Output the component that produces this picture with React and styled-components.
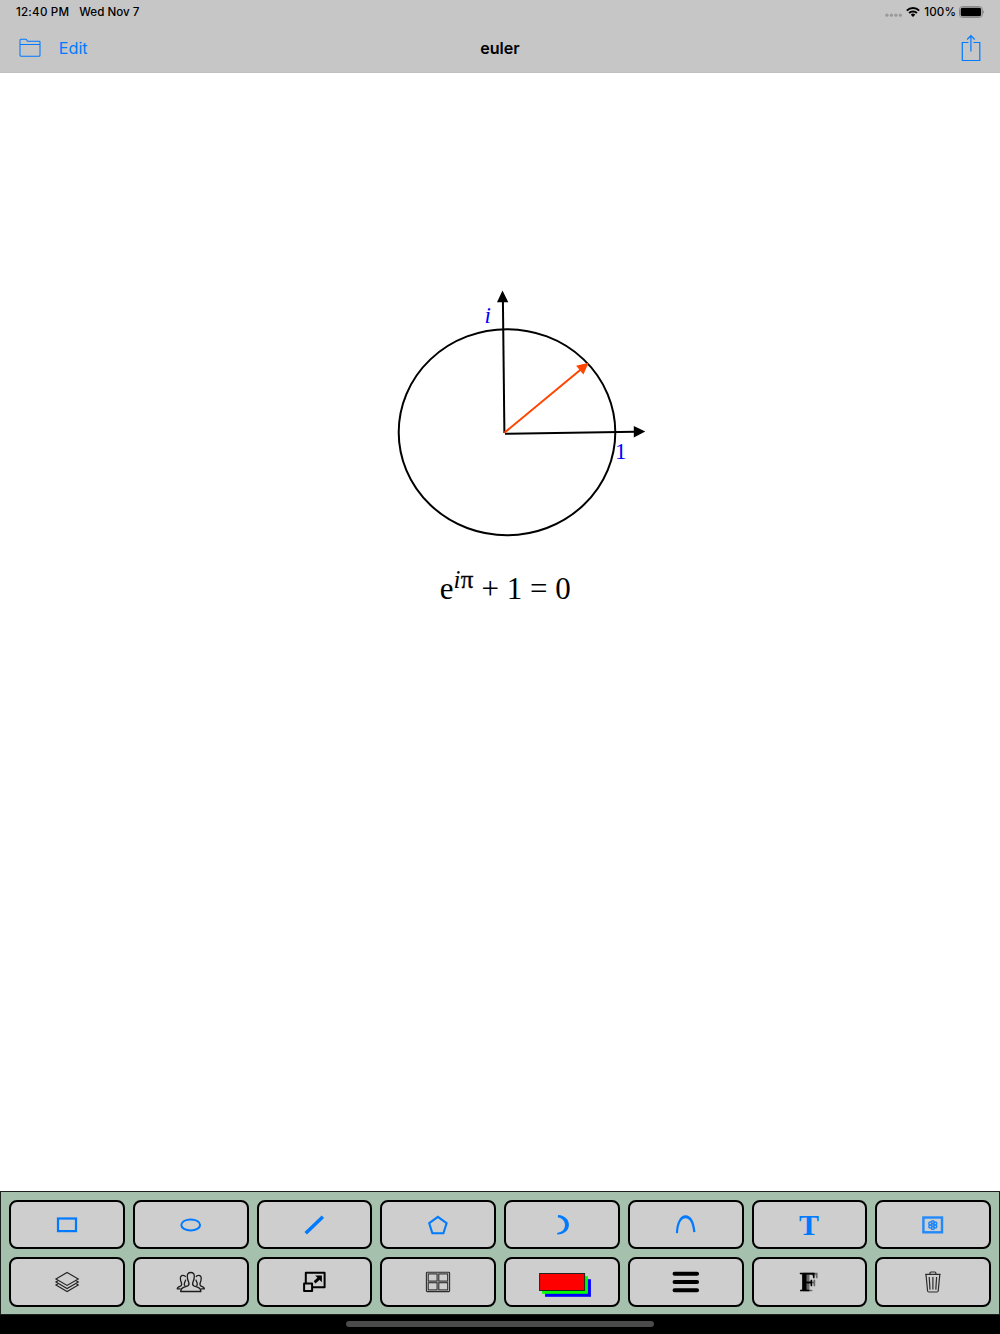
import React from "react";
import styled, { createGlobalStyle } from 'styled-components';

const GlobalStyle = createGlobalStyle`
    * {
        box-sizing: border-box;
    }
    body {
        margin: 0;
        background: #000;
    }
`

const Screen = styled.div`
    display: flex;
    flex-direction: column;
    width: 1000px;
    height: 1334px;
    overflow: hidden;
    background: #000;
    font-family: Inter, sans-serif;
`

const Header = styled.header`
    height: 73px;
    background: #c6c6c6;
    border-bottom: 1px solid #c0c0c0;
    color: #000;
`

const StatusBar = styled.div`
    display: flex;
    justify-content: space-between;
    align-items: center;
    height: 24px;
    padding: 0 15px 0 16px;
    font-size: 11.6px;
    font-weight: 500;
`

const StatusGroup = styled.div`
    display: flex;
    align-items: center;
    gap: ${props => props.$gap}px;
`

const StatusText = styled.span`
    letter-spacing: ${props => props.$spacing || 0}px;
`

const BatteryIcon = styled.svg`
    margin-left: -1px;
`

const NavBar = styled.div`
    display: grid;
    grid-template-columns: 1fr auto 1fr;
    align-items: center;
    height: 48px;
    padding: 0 19px;
`

const NavLeft = styled.div`
    display: flex;
    align-items: center;
    gap: 17.8px;
`

const NavRight = styled.div`
    display: flex;
    justify-content: flex-end;
`

const EditLink = styled.span`
    font-size: 16.2px;
    line-height: 20px;
    color: #007aff;
`

const Title = styled.h1`
    margin: 0;
    font-size: 16.1px;
    line-height: 20px;
    font-weight: 600;
`

const Canvas = styled.main`
    flex: 1;
    background: #fff;
`

const Drawing = styled.svg`
    display: block;
    font-family: "Liberation Serif", serif;
`

const Toolbar = styled.footer`
    display: grid;
    grid-template-columns: repeat(8, 1fr);
    grid-template-rows: 49px 49.5px;
    gap: 8px;
    height: 123.5px;
    padding: 8px;
    background: #a5c1ae;
    border: 1px solid #1c211e;
`

const ToolButton = styled.button`
    display: flex;
    align-items: center;
    justify-content: center;
    padding: 0;
    background: #cecece;
    border: 2px solid #000;
    border-radius: 8px;
`

const Icon = styled.svg`
    display: block;
    flex: none;
    overflow: visible;
    font-family: "Liberation Serif", serif;
    font-weight: bold;
`

const ShadowText = styled.text`
    font-size: 26.5px;
    stroke: #000;
    stroke-width: 0.3px;
    filter: drop-shadow(3.4px 0.5px 0.7px rgba(0, 0, 0, 0.5));
`

const HomeArea = styled.div`
    display: flex;
    justify-content: center;
    height: 19.5px;
    padding-top: 6.5px;
`

const HomeIndicator = styled.div`
    width: 308px;
    height: 6px;
    border-radius: 3px;
    background: #4b4b4b;
`

const BLUE = '#007aff';

// every tool icon is drawn around the centre of its button
const tools = [
    {
        name: 'rectangle',
        art: <rect x="-9" y="-6.5" width="18" height="12.6" fill="none" stroke={BLUE} strokeWidth="2.2" />,
    },
    {
        name: 'ellipse',
        art: <ellipse cx="-0.3" cy="-0.1" rx="9.4" ry="5.5" fill="none" stroke={BLUE} strokeWidth="2" />,
    },
    {
        name: 'line',
        art: <path d="M-8.3 8.3L8.9-8.2" stroke={BLUE} strokeWidth="3.5" />,
    },
    {
        name: 'polygon',
        art: <path d="M-0.1-8.2L8.6-1.8L5.4 8.2H-5.6L-8.8-1.8Z" fill="none" stroke={BLUE} strokeWidth="2.1" />,
    },
    {
        name: 'arc',
        art: <path d="M-4-9.9C3-9.5 6.9-5.2 6.9-0.2C6.9 5.2 2.6 9.3-4.7 9.6L-4.9 8C0 7.4 3 4.6 3 0.1C3-3.8 0.2-7.1-4.2-7.8Z" fill={BLUE} />,
    },
    {
        name: 'curve',
        art: <path d="M-10.1 8C-9.7-2.7-5.9-9.8-0.4-9.8C5-9.8 8.7-3.5 9.4 6.9L7.3 7.2C6.3-2.1 3.8-6.8-0.4-6.8C-4.8-6.8-7.4-1.5-8 8.2Z" fill={BLUE} />,
    },
    {
        name: 'text',
        art: <text x="0" y="9.5" fontSize="30" textAnchor="middle" fill={BLUE}>T</text>,
    },
    {
        name: 'image',
        art: (
            <g fill="none" stroke="#2289fa">
                <rect x="-9.6" y="-7.5" width="18.6" height="14.8" strokeWidth="2.4" />
                <g strokeWidth="1.5">
                    <circle cx="-0.2" cy="0" r="1.5" />
                    <circle cx="-0.2" cy="-2.8" r="1.5" />
                    <circle cx="2.3" cy="-1.5" r="1.5" />
                    <circle cx="2.3" cy="1.5" r="1.5" />
                    <circle cx="-0.2" cy="3" r="1.5" />
                    <circle cx="-2.7" cy="1.5" r="1.5" />
                    <circle cx="-2.7" cy="-1.5" r="1.5" />
                </g>
            </g>
        ),
    },
    {
        name: 'layers',
        art: (
            <g fill="none" stroke="#222" strokeWidth="1.1">
                <path d="M0.1-9.6L11.3-3.1L0.1 3.4L-11.1-3.1Z" />
                <path d="M9.2-1.3L11.3 0L0.1 6.5L-11.1 0L-9-1.3" />
                <path d="M9.2 1.8L11.3 3.1L0.1 9.6L-11.1 3.1L-9 1.8" />
            </g>
        ),
    },
    {
        name: 'group',
        art: (
            <g fill="none" stroke="#1c1c1c" strokeWidth="1.3" strokeLinejoin="round">
                <path d="M-0.2-9.5C-2.8-9.5-3.9-7.7-3.7-5.1C-3.6-2.8-3-1.2-2.3 0.2C-1.8 1.6-2 3.2-3.3 3.9L-7.4 5.4C-9.6 6.3-10.2 7.4-10.3 9.5H9.9C9.8 7.4 9.2 6.3 7 5.4L2.9 3.9C1.6 3.2 1.4 1.6 1.9 0.2C2.6-1.2 3.2-2.8 3.3-5.1C3.5-7.7 2.4-9.5-0.2-9.5Z" />
                <path d="M-5.3-5.2C-5.9-6.2-6.8-6.6-8-6.6C-10-6.6-10.7-5-10.6-3.3C-10.5-1.6-10.1-0.4-9.6 0.8C-9.1 2.4-9.4 3.6-10.5 4.2L-12.2 4.9C-13.4 5.4-13.7 5.8-13.8 6.8H-10.4M-5.8 3.9C-6.9 3.2-7 2.2-6.5 0.9C-5.9-0.3-5.5-1.3-5.3-2.4" />
                <path d="M4.9-5.2C5.5-6.2 6.4-6.6 7.6-6.6C9.6-6.6 10.3-5 10.2-3.3C10.1-1.6 9.7-0.4 9.2 0.8C8.7 2.4 9 3.6 10.1 4.2L11.8 4.9C13 5.4 13.3 5.8 13.4 6.8H10M5.4 3.9C6.5 3.2 6.6 2.2 6.1 0.9C5.5-0.3 5.1-1.3 4.9-2.4" />
            </g>
        ),
    },
    {
        name: 'resize',
        art: (
            <g fill="none" stroke="#000" strokeWidth="2" strokeLinejoin="round">
                <path d="M-8.2 1V-9.3H10.6V5.2H-1.2" />
                <rect x="-9.9" y="1.6" width="8" height="7.5" />
                <path d="M0.6 0.4L5-3.6" strokeWidth="2.8" />
                <path d="M1.2-6.6H7.9V0.2Z" fill="#000" stroke="none" />
            </g>
        ),
    },
    {
        name: 'grid',
        art: (
            <g fill="none" stroke="#2c2c2c" strokeWidth="1.1">
                <rect x="-11.6" y="-9.8" width="23.2" height="19.4" rx="0.8" />
                <rect x="-9.8" y="-8.1" width="8.9" height="7.2" />
                <rect x="0.8" y="-8.1" width="8.9" height="7.2" />
                <rect x="-9.8" y="0.7" width="8.9" height="7.2" />
                <rect x="0.8" y="0.7" width="8.9" height="7.2" />
            </g>
        ),
    },
    {
        name: 'color',
        art: (
            <g>
                <rect x="-16.9" y="-2.8" width="45.8" height="17.6" fill="#00f" />
                <rect x="-19.9" y="-5.8" width="45.8" height="17.6" fill="#0f0" />
                <rect x="-22.4" y="-8.5" width="45" height="17" fill="#f00" stroke="#222" strokeWidth="1" />
            </g>
        ),
    },
    {
        name: 'stroke',
        art: <path d="M-11.4-8.2H11M-11.4 0H11M-11.4 8.2H11" stroke="#000" strokeWidth="4.1" strokeLinecap="round" />,
    },
    {
        name: 'shadow',
        art: <ShadowText x="-9.6" y="8.7">F</ShadowText>,
    },
    {
        name: 'trash',
        art: (
            <g fill="none" stroke="#2c2c2c" strokeWidth="1.2" strokeLinejoin="round">
                <path d="M-7.8-7.6H7.6M-3.1-7.8V-8.8Q-3.1-10-1.9-10H1.8Q2.9-10 2.9-8.8V-7.8" />
                <path d="M-7-7.4L-5.4 9Q-5.2 10-4.2 10H4Q5 10 5.2 9L6.8-7.4" />
                <path d="M-3.8-5L-3 7.6M-0.1-5V7.6M3.6-5L2.8 7.6" />
            </g>
        ),
    },
];

const App = () => {
    return(
        <Screen>
            <GlobalStyle />
            <Header>
                <StatusBar>
                    <StatusGroup $gap={10}>
                        <StatusText $spacing={0.2}>12:40 PM</StatusText>
                        <StatusText>Wed Nov 7</StatusText>
                    </StatusGroup>
                    <StatusGroup $gap={4}>
                        <svg width="17" height="4" viewBox="0 0 17 4" fill="#999" overflow="visible">
                            <circle cx="1.9" cy="5.2" r="1.6" />
                            <circle cx="6.4" cy="5.2" r="1.6" />
                            <circle cx="10.9" cy="5.2" r="1.6" />
                            <circle cx="15.4" cy="5.2" r="1.6" />
                        </svg>
                        <svg width="14" height="10" viewBox="0 0 14 10" fill="none" stroke="#000" strokeWidth="2">
                            <path d="M0.8 3.6A8.8 8.8 0 0 1 13.2 3.6" />
                            <path d="M3.1 6A5.5 5.5 0 0 1 10.9 6" />
                            <path d="M7 10L4.8 7.8A3 3 0 0 1 9.2 7.8Z" fill="#000" stroke="none" />
                        </svg>
                        <StatusText $spacing={0.1}>100%</StatusText>
                        <BatteryIcon width="26" height="12" viewBox="0 0 26 12">
                            <rect x="0.5" y="0.6" width="22.8" height="10.8" rx="2.8" fill="none" stroke="#858585" />
                            <rect x="1.7" y="1.8" width="20.4" height="8.4" rx="1.6" />
                            <path d="M24.2 4.2Q26 6 24.2 7.8Z" fill="#777" />
                        </BatteryIcon>
                    </StatusGroup>
                </StatusBar>
                <NavBar>
                    <NavLeft>
                        <svg width="22" height="20" viewBox="0 0 22 20" fill="none" stroke={BLUE} strokeWidth="1.05">
                            <path d="M1 2.2Q1 1.3 1.9 1.3H6.9Q7.4 1.3 7.7 2L8.4 3.2H20.2Q21 3.2 21 4V17.2Q21 18.2 20 18.2H2Q1 18.2 1 17.2ZM1 6.4H21" />
                        </svg>
                        <EditLink>Edit</EditLink>
                    </NavLeft>
                    <Title>euler</Title>
                    <NavRight>
                        <svg width="20" height="28" viewBox="0 0 20 28" fill="none" stroke={BLUE} strokeWidth="1.2">
                            <path d="M7.5 8.5H1.3V26.5H18.8V8.5H12.4M9.9 17.5V1.8M6.1 5.5L9.9 1.7L13.7 5.5" />
                        </svg>
                    </NavRight>
                </NavBar>
            </Header>
            <Canvas>
                <Drawing width="1000" height="1118" viewBox="0 73 1000 1118">
                    <ellipse cx="507" cy="432.2" rx="108.3" ry="103" fill="none" stroke="#000" strokeWidth="2" />
                    <g stroke="#000" strokeWidth="2">
                        <path d="M504.4 433L502.9 300" />
                        <path d="M505 433.8L635 431.8" />
                    </g>
                    <path d="M502.5 290.6L508.3 302.2H497ZM645.3 431.6L633.8 437.4V426Z" />
                    <path d="M504.3 432.8L582 368.5" stroke="#ff4500" strokeWidth="2" />
                    <path d="M588.7 362.7L583.4 374.4L576.1 365.7Z" fill="#ff4500" />
                    <text x="484.4" y="322.8" fontSize="23" fontStyle="italic" fill="#00f">i</text>
                    <text x="615" y="459.2" fontSize="23" fill="#00f">1</text>
                    <text x="439.7" y="598.6" fontSize="31">e</text>
                    <text x="453.6" y="588" fontSize="25" fontStyle="italic">i</text>
                    <text x="460.8" y="588" fontSize="25" stroke="#000" strokeWidth="0.3">π</text>
                    <text x="481.6" y="598.6" fontSize="31">+ 1 = 0</text>
                </Drawing>
            </Canvas>
            <Toolbar>
                {tools.map(tool => (
                    <ToolButton key={tool.name} aria-label={tool.name}>
                        <Icon width="60" height="40" viewBox="-30 -20 60 40">{tool.art}</Icon>
                    </ToolButton>
                ))}
            </Toolbar>
            <HomeArea>
                <HomeIndicator />
            </HomeArea>
        </Screen>
    );
}

export default App;
